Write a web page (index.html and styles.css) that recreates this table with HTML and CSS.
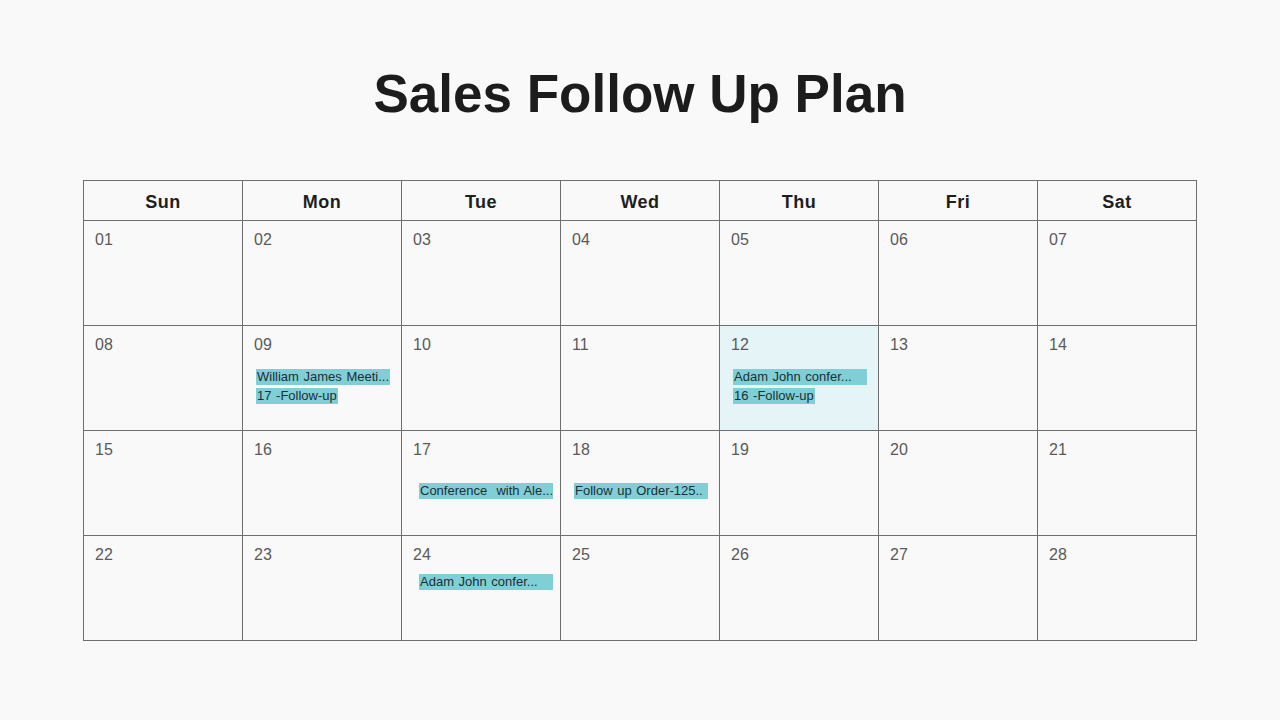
FILE: index.html
```html
<!DOCTYPE html>
<html lang="en">
<head>
<meta charset="utf-8">
<title>Sales Follow Up Plan</title>
<link rel="stylesheet" href="styles.css">
</head>
<body>
<main class="page">
  <h1 class="title">Sales Follow Up Plan</h1>
  <div class="calendar">
    <div class="head">Sun</div>
    <div class="head">Mon</div>
    <div class="head">Tue</div>
    <div class="head">Wed</div>
    <div class="head">Thu</div>
    <div class="head">Fri</div>
    <div class="head">Sat</div>

    <div class="cell"><span class="date">01</span></div>
    <div class="cell"><span class="date">02</span></div>
    <div class="cell"><span class="date">03</span></div>
    <div class="cell"><span class="date">04</span></div>
    <div class="cell"><span class="date">05</span></div>
    <div class="cell"><span class="date">06</span></div>
    <div class="cell"><span class="date">07</span></div>

    <div class="cell"><span class="date">08</span></div>
    <div class="cell"><span class="date">09</span>
      <div class="events ev-mid">
        <span class="event event-wide">William James Meeti...</span>
        <span class="event">17 -Follow-up</span>
      </div>
    </div>
    <div class="cell"><span class="date">10</span></div>
    <div class="cell"><span class="date">11</span></div>
    <div class="cell cell-today"><span class="date">12</span>
      <div class="events ev-mid">
        <span class="event event-wide">Adam John confer...</span>
        <span class="event">16 -Follow-up</span>
      </div>
    </div>
    <div class="cell"><span class="date">13</span></div>
    <div class="cell"><span class="date">14</span></div>

    <div class="cell"><span class="date">15</span></div>
    <div class="cell"><span class="date">16</span></div>
    <div class="cell"><span class="date">17</span>
      <div class="events ev-low ev-indent">
        <span class="event event-wide">Conference&nbsp; with Ale...</span>
      </div>
    </div>
    <div class="cell"><span class="date">18</span>
      <div class="events ev-low">
        <span class="event event-wide">Follow up Order-125..</span>
      </div>
    </div>
    <div class="cell"><span class="date">19</span></div>
    <div class="cell"><span class="date">20</span></div>
    <div class="cell"><span class="date">21</span></div>

    <div class="cell"><span class="date">22</span></div>
    <div class="cell"><span class="date">23</span></div>
    <div class="cell"><span class="date">24</span>
      <div class="events ev-high ev-indent">
        <span class="event event-wide">Adam John confer...</span>
      </div>
    </div>
    <div class="cell"><span class="date">25</span></div>
    <div class="cell"><span class="date">26</span></div>
    <div class="cell"><span class="date">27</span></div>
    <div class="cell"><span class="date">28</span></div>
  </div>
</main>
</body>
</html>
```

FILE: styles.css
```css
html, body {
  margin: 0;
  padding: 0;
  background: #f9f9f9;
}

body {
  font-family: "Liberation Sans", Arial, sans-serif;
  color: #1e1e1e;
  width: 1280px;
  height: 720px;
  overflow: hidden;
}

.page {
  display: flex;
  flex-direction: column;
  align-items: center;
  padding-top: 63px;
}

.title {
  margin: 0;
  font-size: 53px;
  line-height: 61px;
  font-weight: 700;
  color: #1c1c1c;
}

.calendar {
  margin-top: 56px;
  display: grid;
  grid-template-columns: repeat(7, 159px);
  grid-template-rows: 40px repeat(4, 105px);
  border-left: 1px solid #6e6e6e;
  border-top: 1px solid #6e6e6e;
}

.head,
.cell {
  border-right: 1px solid #6e6e6e;
  border-bottom: 1px solid #6e6e6e;
}

.head {
  display: flex;
  align-items: center;
  justify-content: center;
  font-size: 18px;
  font-weight: 700;
  letter-spacing: 0.5px;
  color: #1e1e1e;
  padding-top: 3px;
}

.cell {
  display: flex;
  flex-direction: column;
  align-items: flex-start;
  padding: 11px 12px 0 11px;
  background: #f9f9f9;
}

.cell-today {
  background: #e5f4f7;
}

.date {
  font-size: 16px;
  line-height: 16px;
  color: #5a5a5a;
}

.events {
  display: flex;
  flex-direction: column;
  align-items: flex-start;
  gap: 3px;
  margin-left: 2px;
}

.ev-mid { margin-top: 16px; }
.ev-low { margin-top: 25px; }
.ev-high { margin-top: 11px; }
.ev-indent { margin-left: 6px; }

.event {
  display: block;
  background: #80ced6;
  color: #1a3034;
  font-size: 13px;
  line-height: 16px;
  padding: 0 1px;
  word-spacing: 1px;
  white-space: nowrap;
  overflow: hidden;
}

.event-wide {
  width: 132px;
}
```
